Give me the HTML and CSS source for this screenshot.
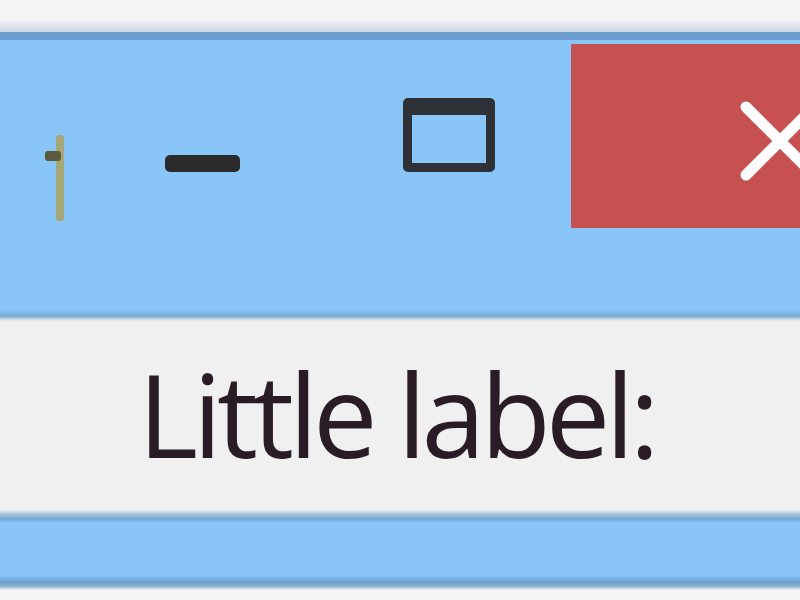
FILE: index.html
```html
<!DOCTYPE html>
<html>
<head>
<meta charset="utf-8">
<link rel="stylesheet" href="styles.css">
</head>
<body>
<div class="page">
  <div class="top-gap"></div>
  <div class="window">
    <div class="titlebar">
      <svg class="app-icon" width="30" height="90" viewBox="0 0 30 90">
        <rect x="16" y="0" width="8" height="86" rx="3" fill="#a6a877"/>
        <rect x="5" y="16" width="16" height="10" rx="3" fill="#5c5a3c"/>
      </svg>
      <div class="btn-min"></div>
      <div class="btn-max"></div>
      <div class="btn-close">
        <svg width="80" height="80" viewBox="0 0 80 80">
          <path d="M6 6 L74 74 M74 6 L6 74" stroke="#ffffff" stroke-width="11" stroke-linecap="round"/>
        </svg>
      </div>
    </div>
    <div class="title-edge"></div>
    <div class="content">
      <span class="label">Little label:</span>
    </div>
    <div class="frame-bottom">
      <div class="fb-top"></div>
      <div class="fb-mid"></div>
      <div class="fb-low"></div>
    </div>
  </div>
</div>
</body>
</html>
```

FILE: styles.css
```css
html, body {
  margin: 0;
  padding: 0;
  background: #f5f5f5;
}
.page {
  width: 800px;
  height: 600px;
  overflow: hidden;
  display: flex;
  flex-direction: column;
}
.top-gap {
  height: 32px;
  background: linear-gradient(#f5f5f5 60%, #c8d6e2);
}
.window {
  display: flex;
  flex-direction: column;
}
.titlebar {
  height: 270px;
  background: #8ac5f8;
  border-top: 8px solid #6c9fcf;
  display: flex;
  align-items: flex-start;
  box-sizing: content-box;
}
.app-icon {
  margin-left: 40px;
  margin-top: 95px;
  flex: none;
}
.btn-min {
  flex: none;
  width: 75px;
  height: 17px;
  background: #2b2b2b;
  border-radius: 5px;
  margin-left: 95px;
  margin-top: 115px;
}
.btn-max {
  flex: none;
  width: 74px;
  height: 48px;
  border: 9px solid #2e3236;
  border-top-width: 17px;
  border-radius: 5px;
  margin-left: 163px;
  margin-top: 58px;
}
.btn-close {
  flex: 1;
  height: 184px;
  margin-left: 76px;
  margin-top: 4px;
  background: #c75151;
  padding-left: 169px;
  padding-top: 57px;
  box-sizing: border-box;
}
.btn-close svg {
  display: block;
}
.title-edge {
  height: 11px;
  background: linear-gradient(#8ac5f8, #74a8d6 55%, #c8d8e4 85%, #f0f0f0);
}
.content {
  height: 189px;
  background: #f0f0f0;
  display: flex;
  align-items: center;
  padding-left: 138px;
}
.label {
  font-family: "Open Sans", "Noto Sans", sans-serif;
  font-size: 115px;
  letter-spacing: -5px;
  color: #2a1c26;
  line-height: 1;
  margin-top: -4px;
}
.frame-bottom {
  display: flex;
  flex-direction: column;
}
.fb-top {
  height: 13px;
  background: linear-gradient(#f0f0f0, #a8c4dc 30%, #74a9d8 70%, #8ac5f8);
}
.fb-mid {
  height: 52px;
  background: #8ac5f8;
}
.fb-low {
  height: 15px;
  background: linear-gradient(#8ac5f8, #6c9fcf 50%, #8fb2cf 75%, #f5f5f5);
}
```
